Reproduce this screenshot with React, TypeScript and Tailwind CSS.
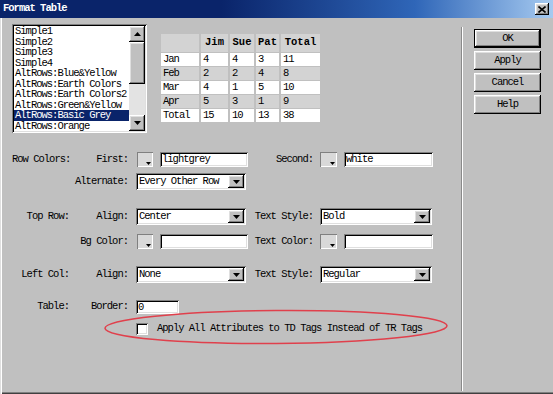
import React from 'react';

// classic 3D bevels
const raised =
  'shadow-[inset_-1px_-1px_#000,inset_1px_1px_#fff,inset_-2px_-2px_#808080,inset_2px_2px_#dfdfdf]';
const sunken =
  'shadow-[inset_1px_1px_#808080,inset_-1px_-1px_#fff,inset_2px_2px_#000,inset_-2px_-2px_#dfdfdf]';

const items = [
  'Simple1',
  'Simple2',
  'Simple3',
  'Simple4',
  'AltRows:Blue&Yellow',
  'AltRows:Earth Colors',
  'AltRows:Earth Colors2',
  'AltRows:Green&Yellow',
  'AltRows:Basic Grey',
  'AltRows:Orange',
];

const rows = [
  ['Jan', '4', '4', '3', '11'],
  ['Feb', '2', '2', '4', '8'],
  ['Mar', '4', '1', '5', '10'],
  ['Apr', '5', '3', '1', '9'],
  ['Total', '15', '10', '13', '38'],
];

function Arrow({ up = false }: { up?: boolean }) {
  return (
    <svg width="7" height="4" viewBox="0 0 7 4">
      <path d={up ? 'M0 4H7L3.5 0Z' : 'M0 0H7L3.5 4Z'} fill="#000" />
    </svg>
  );
}

function Select({ value, w }: { value: string; w: string }) {
  return (
    <div className={`flex h-[17px] bg-white p-[2px] ${sunken} ${w}`}>
      <span className="flex-1 pl-[1px] leading-[13px]">{value}</span>
      <div className={`flex h-[13px] w-[16px] items-center justify-center bg-[#c0c0c0] ${raised}`}>
        <Arrow />
      </div>
    </div>
  );
}

function Field({ value = '', w, h = 'h-[15px]' }: { value?: string; w: string; h?: string }) {
  return (
    <div className={`flex items-center bg-white pl-[2px] ${sunken} ${w} ${h}`}>
      <span className="leading-[11px]">{value}</span>
    </div>
  );
}

function Swatch({ w }: { w: string }) {
  return (
    <div
      className={`flex h-[15px] items-end justify-end border-t border-l border-[#808080] bg-[#d9d9d9] pr-[2px] pb-[2px] shadow-[inset_-1px_-1px_#fff] ${w}`}
    >
      <svg width="5" height="3" viewBox="0 0 5 3">
        <path d="M0 0H5L2.5 3Z" fill="#000" />
      </svg>
    </div>
  );
}

function Button({ label, isDefault = false }: { label: string; isDefault?: boolean }) {
  return (
    <div
      className={`flex h-[19px] w-[67px] items-center justify-center bg-[#c0c0c0] ${
        isDefault ? 'border border-black' : ''
      }`}
    >
      <div className={`flex h-full w-full items-center justify-center ${raised}`}>{label}</div>
    </div>
  );
}

export default function App() {
  return (
    <div className="relative flex h-[394px] w-[553px] flex-col overflow-hidden bg-[#c0c0c0] font-['Liberation_Mono',monospace] text-[10.5px] tracking-[-1px] whitespace-nowrap text-black">
      {/* title bar */}
      <div className="flex h-[18px] items-center justify-between bg-[linear-gradient(to_right,#0a246a_0%,#0a246a_40%,#2f66b8_75%,#a6caf0_100%)] pl-[3px] pr-[4px]">
        <span className="font-bold text-white">Format Table</span>
        <div className={`flex h-[12px] w-[14px] items-center justify-center bg-[#c0c0c0] ${raised}`}>
          <svg width="8" height="7" viewBox="0 0 8 7">
            <path d="M0.5 0.5L7.5 6.5M7.5 0.5L0.5 6.5" stroke="#000" strokeWidth="1.6" />
          </svg>
        </div>
      </div>

      <div className="flex flex-1 shadow-[inset_1px_0_#dfdfdf,inset_2px_0_#fff,inset_0_-1px_#404040,inset_0_-2px_#808080]">
        {/* left pane */}
        <div className="flex w-[461px] flex-col pl-[12px]">
          <div className="mt-[6px] flex">
            {/* list box */}
            <div className={`flex h-[109px] w-[135px] p-[2px] ${sunken}`}>
              <div className="flex-1 overflow-hidden bg-white">
                {items.map((it, i) => (
                  <div
                    key={it}
                    className={`h-[10.5px] pl-[1px] leading-[10.5px] ${
                      i === 8 ? 'bg-[#0a246a] text-white' : ''
                    }`}
                  >
                    {it}
                  </div>
                ))}
              </div>
              <div className="flex w-[16px] flex-col bg-[#e3e3e3]">
                <div className={`flex h-[16px] items-center justify-center bg-[#c0c0c0] ${raised}`}>
                  <Arrow up />
                </div>
                <div className={`h-[42px] bg-[#c0c0c0] ${raised}`} />
                <div className="flex-1" />
                <div className={`flex h-[16px] items-center justify-center bg-[#c0c0c0] ${raised}`}>
                  <Arrow />
                </div>
              </div>
            </div>

            {/* preview table */}
            <div className="mt-[10px] ml-[14px] grid h-fit grid-cols-[38px_27px_24px_23px_39px] grid-rows-[18px_13px_13px_13px_13px_13px] gap-x-[2px] gap-y-[1px]">
              <div className="bg-[#d3d3d3]" />
              {['Jim', 'Sue', 'Pat', 'Total'].map((h) => (
                <div
                  key={h}
                  className="flex items-center justify-center bg-[#d3d3d3] text-[10.5px] font-bold tracking-[0px]"
                >
                  {h}
                </div>
              ))}
              {rows.map((r, i) =>
                r.map((c, j) => (
                  <div
                    key={`${i}-${j}`}
                    className={`pl-[2px] leading-[13px] ${i % 2 === 1 ? 'bg-[#d3d3d3]' : 'bg-white'}`}
                  >
                    {c}
                  </div>
                )),
              )}
            </div>
          </div>

          {/* Row Colors */}
          <div className="mt-[19px] flex h-[15px] items-center">
            <span className="w-[57px] text-right">Row Colors:</span>
            <span className="w-[59px] text-right">First:</span>
            <span className="w-[9px]" />
            <Swatch w="w-[16px]" />
            <span className="w-[7px]" />
            <Field value="lightgrey" w="w-[88px]" />
            <span className="w-[65px] text-right">Second:</span>
            <span className="w-[7px]" />
            <Swatch w="w-[17px]" />
            <span className="w-[7px]" />
            <Field value="white" w="w-[89px]" />
          </div>

          <div className="mt-[6px] flex h-[17px] items-center">
            <span className="w-[57px]" />
            <span className="w-[59px] text-right">Alternate:</span>
            <span className="w-[8px]" />
            <Select value="Every Other Row" w="w-[110px]" />
          </div>

          {/* Top Row */}
          <div className="mt-[18px] flex h-[17px] items-center">
            <span className="w-[57px] text-right">Top Row:</span>
            <span className="w-[59px] text-right">Align:</span>
            <span className="w-[8px]" />
            <Select value="Center" w="w-[110px]" />
            <span className="w-[67px] text-right">Text Style:</span>
            <span className="w-[7px]" />
            <Select value="Bold" w="w-[112px]" />
          </div>

          <div className="mt-[9px] flex h-[15px] items-center">
            <span className="w-[57px]" />
            <span className="w-[59px] text-right">Bg Color:</span>
            <span className="w-[9px]" />
            <Swatch w="w-[16px]" />
            <span className="w-[7px]" />
            <Field w="w-[88px]" />
            <span className="w-[65px] text-right">Text Color:</span>
            <span className="w-[7px]" />
            <Swatch w="w-[17px]" />
            <span className="w-[7px]" />
            <Field w="w-[89px]" />
          </div>

          {/* Left Col */}
          <div className="mt-[17px] flex h-[17px] items-center">
            <span className="w-[57px] text-right">Left Col:</span>
            <span className="w-[59px] text-right">Align:</span>
            <span className="w-[8px]" />
            <Select value="None" w="w-[110px]" />
            <span className="w-[67px] text-right">Text Style:</span>
            <span className="w-[7px]" />
            <Select value="Regular" w="w-[112px]" />
          </div>

          {/* Table */}
          <div className="mt-[17px] flex h-[14px] items-center">
            <span className="w-[57px] text-right">Table:</span>
            <span className="w-[59px] text-right">Border:</span>
            <span className="w-[8px]" />
            <Field value="0" w="w-[43px]" h="h-[14px]" />
          </div>

          <div className="mt-[8px] flex h-[13px] items-center">
            <span className="w-[124px]" />
            <div className={`h-[12px] w-[12px] bg-white ${sunken}`} />
            <span className="ml-[9px]">Apply All Attributes to TD Tags Instead of TR Tags</span>
          </div>
        </div>

        {/* separator */}
        <div className="mt-[9px] mb-[3px] w-[2px] shadow-[inset_1px_0_#8a8a8a,inset_-1px_0_#fff]" />

        {/* buttons */}
        <div className="flex flex-col gap-[3px] pt-[11px] pl-[11px]">
          <Button label="OK" isDefault />
          <Button label="Apply" />
          <Button label="Cancel" />
          <Button label="Help" />
        </div>
      </div>

      {/* red annotation ellipse */}
      <svg className="absolute top-[306px] left-[100px]" width="356" height="44" viewBox="0 0 356 44">
        <ellipse
          cx="176"
          cy="21"
          rx="171"
          ry="16.5"
          transform="rotate(-0.4 176 21)"
          fill="none"
          stroke="#e0404c"
          strokeWidth="1.6"
        />
      </svg>
    </div>
  );
}
